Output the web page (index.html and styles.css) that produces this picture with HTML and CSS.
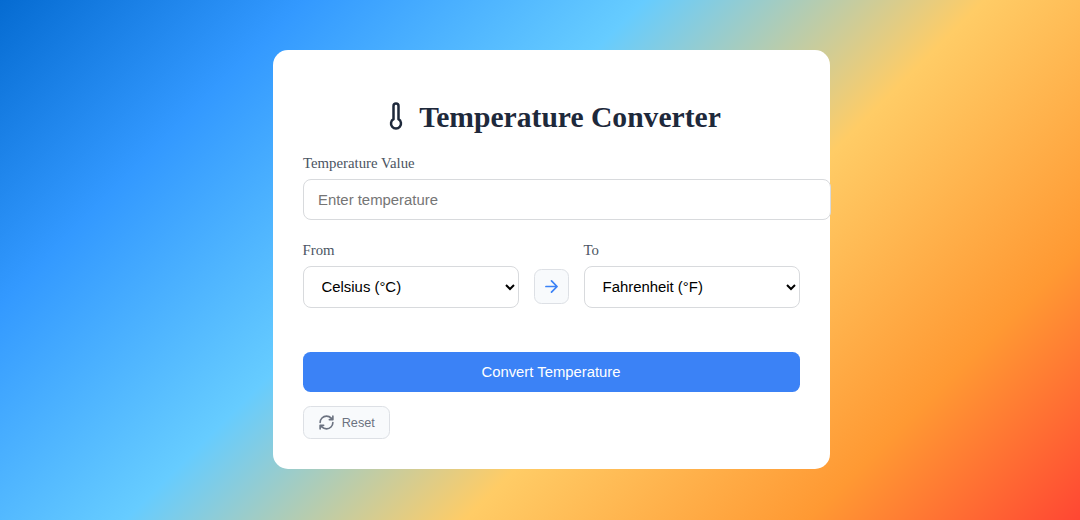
FILE: index.html
```html
<!DOCTYPE html>
<html lang="en">
<head>
<meta charset="UTF-8">
<title>Temperature Converter</title>
<link rel="stylesheet" href="styles.css">
</head>
<body>
<main class="card">
  <h1 class="title">
    <svg class="thermo" viewBox="0 0 24 24" fill="none" stroke="currentColor" stroke-width="2" stroke-linecap="round" stroke-linejoin="round"><path d="M14 4v10.54a4 4 0 1 1-4 0V4a2 2 0 0 1 4 0Z"/></svg>
    <span>Temperature Converter</span>
  </h1>
  <label class="label" for="value">Temperature Value</label>
  <input class="input" id="value" type="number" placeholder="Enter temperature">
  <div class="units">
    <div class="unit">
      <label class="label" for="from">From</label>
      <select class="select" id="from"><option>Celsius (°C)</option><option>Fahrenheit (°F)</option></select>
    </div>
    <button class="swap" type="button" aria-label="Swap units">
      <svg width="19" height="19" viewBox="0 0 24 24" fill="none" stroke="currentColor" stroke-width="2.2" stroke-linecap="round" stroke-linejoin="round"><path d="M5 12h14M12 5l7 7-7 7"/></svg>
    </button>
    <div class="unit">
      <label class="label" for="to">To</label>
      <select class="select" id="to"><option>Fahrenheit (°F)</option><option>Celsius (°C)</option></select>
    </div>
  </div>
  <button class="convert" type="button">Convert Temperature</button>
  <button class="reset" type="button">
    <svg width="17" height="17" viewBox="0 0 24 24" fill="none" stroke="currentColor" stroke-width="2.3" stroke-linecap="round" stroke-linejoin="round"><path d="M3 12a9 9 0 0 1 9-9 9.75 9.75 0 0 1 6.74 2.74L21 8M21 3v5h-5M21 12a9 9 0 0 1-9 9 9.75 9.75 0 0 1-6.74-2.74L3 16M8 16H3v5"/></svg>
    <span>Reset</span>
  </button>
</main>
</body>
</html>
```

FILE: styles.css
```css
* { box-sizing: border-box; }
body {
  margin: 0;
  height: 520px;
  overflow: hidden;
  padding: 49.5px 0 0 273px;
  font-family: "Liberation Serif", serif;
  background: linear-gradient(135deg, #0066cc -2.2%, #3399ff 19%, #66ccff 40.3%, #ffcc66 61.5%, #ff9933 83%, #ff3333 104%);
}
.card {
  width: 557px;
  height: 419.5px;
  padding: 50px 30px 30px;
  border-radius: 15px;
  background: #fff;
}
.title {
  display: flex;
  align-items: center;
  justify-content: center;
  gap: 8px;
  height: 34px;
  margin: 0 0 21px -1px;
  font-size: 29.6px;
  color: #1e293b;
}
.title span { padding-top: 1px; }
.thermo { width: 30px; height: 30px; margin-top: -1px; }
.label {
  display: block;
  height: 17px;
  margin-bottom: 8px;
  font-size: 14.8px;
  line-height: 17px;
  color: #4b5563;
}
.input {
  display: block;
  width: 528.5px;
  height: 41px;
  margin: -0.3px 0 0 -0.5px;
  padding: 1px 14.5px 0;
  border: 1px solid #d8dadd;
  border-radius: 8px;
  font: 14.9px "Liberation Sans", sans-serif;
}
.units { display: flex; gap: 14.8px; margin: 22px 0 0 -0.5px; }
.unit { flex: 1; }
.select {
  display: block;
  width: 100%;
  height: 42px;
  margin-top: -1px;
  padding: 0 13px 0 14px;
  border: 1px solid #d8dadd;
  border-radius: 8px;
  background: #fff;
  font: 14.9px "Liberation Sans", sans-serif;
}
.swap {
  display: flex;
  align-items: center;
  justify-content: center;
  width: 35px;
  height: 35px;
  margin-top: 26.5px;
  padding: 0;
  border: 1px solid #dde0e5;
  border-radius: 7.5px;
  background: #f8fafc;
  color: #3b82f6;
}
.convert {
  display: block;
  width: 100%;
  height: 40px;
  margin-top: 44px;
  padding: 0 1px 0 0;
  border: 0;
  border-radius: 7.5px;
  background: #3b82f6;
  color: #fff;
  font: 14.85px "Liberation Sans", sans-serif;
}
.reset {
  display: flex;
  align-items: center;
  justify-content: center;
  gap: 7px;
  width: 87.5px;
  height: 33px;
  margin: 14px 0 0 -0.5px;
  padding: 0;
  border: 1px solid #dde0e5;
  border-radius: 7.5px;
  background: #f8fafc;
  color: #6b7280;
  font: 13px "Liberation Sans", sans-serif;
}
.reset span { font-size: 12.7px; }
```
